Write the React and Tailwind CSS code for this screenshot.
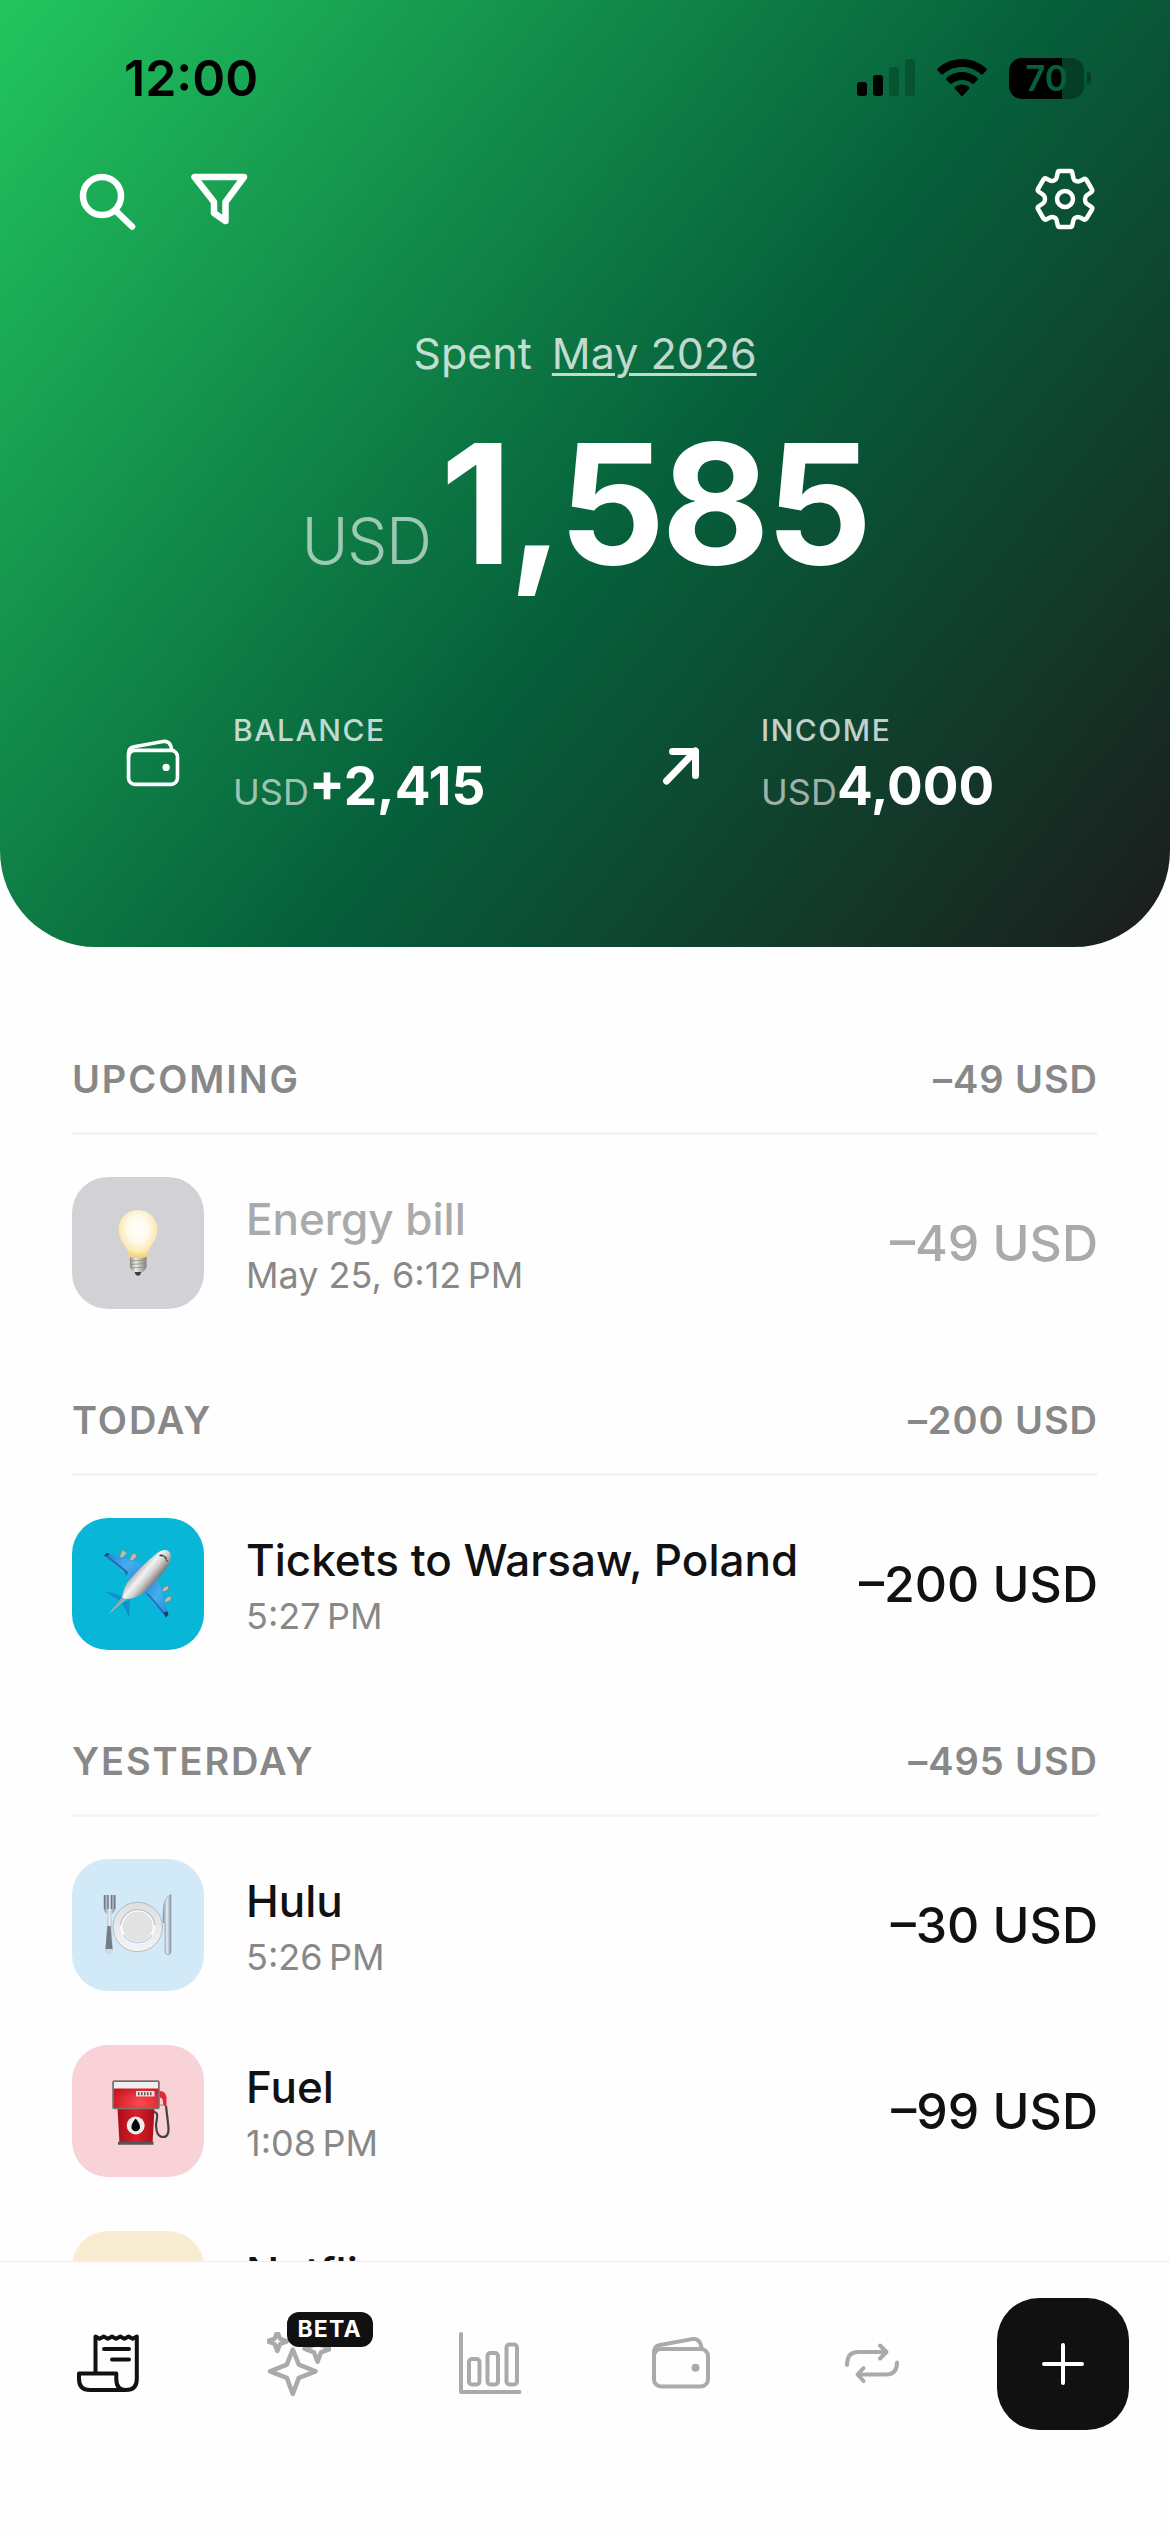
const sections = [
    {
        title: 'Upcoming',
        total: '–49 USD',
        items: [
            { name: 'Energy bill', time: 'May 25, 6:12\u202fPM', amount: '–49 USD', icon: 'bulb', tile: 'bg-[#d1d1d6]', muted: true },
        ],
    },
    {
        title: 'Today',
        total: '–200 USD',
        items: [
            { name: 'Tickets to Warsaw, Poland', time: '5:27\u202fPM', amount: '–200 USD', icon: 'plane', tile: 'bg-[#08b6d8]' },
        ],
    },
    {
        title: 'Yesterday',
        total: '–495 USD',
        items: [
            { name: 'Hulu', time: '5:26\u202fPM', amount: '–30 USD', icon: 'plate', tile: 'bg-[#d2eaf7]' },
            { name: 'Fuel', time: '1:08\u202fPM', amount: '–99 USD', icon: 'pump', tile: 'bg-[#f8d2d7]' },
            { name: 'Netflix', time: '12:40\u202fPM', amount: '–366 USD', tile: 'bg-[#f9edd1]' },
        ],
    },
];

const Icon = ({ children, className = 'size-16', stroke = 4 }) => (
    <svg viewBox="0 0 64 64" className={className} fill="none" stroke="currentColor" strokeWidth={stroke} strokeLinecap="round" strokeLinejoin="round" aria-hidden="true">
        {children}
    </svg>
);

const WalletIcon = ({ className, stroke }) => (
    <Icon className={className} stroke={stroke}>
        <rect x="5" y="17" width="54" height="37.5" rx="7" />
        <path d="M5 24.500V20.500Q5 14 11 13L43 7.100Q51.500 6 52.500 16.500" />
        <circle cx="46.500" cy="35.800" r="4" fill="currentColor" stroke="none" />
    </Icon>
);

const BulbEmoji = () => (
    <svg viewBox="0 0 66 66" className="size-[66px] overflow-visible" aria-hidden="true">
        <defs>
            <radialGradient id="glass" cx="0.5" cy="0.4" r="0.56">
                <stop offset="0" stopColor="#fffefa" />
                <stop offset="0.5" stopColor="#fefaea" />
                <stop offset="0.85" stopColor="#fbe9b0" />
                <stop offset="1" stopColor="#f3d57c" />
            </radialGradient>
            <linearGradient id="cap">
                <stop offset="0" stopColor="#8d8a80" />
                <stop offset="0.35" stopColor="#eeece6" />
                <stop offset="1" stopColor="#817e76" />
            </linearGradient>
        </defs>
        <path d="M29 61h8l-2 4q-2 1.500-4 0z" fill="#3c3c3c" />
        <path d="M25 46h16.500v11q-2 5-5 5h-7q-3-1-4.500-5z" fill="url(#cap)" />
        <path d="M25.500 51l15.500-1M25.500 54.500l15.500-1M26 58l14-1" stroke="#8f8c84" strokeWidth="0.8" />
        <path d="M33 0C22 0 13.500 8.500 13.500 19.500c0 11.500 8 15 11 27.500 5 1.500 12 1.500 17 0 3-12.500 11-16 11-27.500C52.500 8.500 44 0 33 0z" fill="url(#glass)" />
    </svg>
);

const PlaneEmoji = () => (
    <svg viewBox="0 0 66 66" className="size-[66px] overflow-visible" aria-hidden="true">
        <defs>
            <linearGradient id="body" gradientUnits="userSpaceOnUse" x1="30" y1="20" x2="48" y2="35">
                <stop offset="0" stopColor="#a9a9a9" />
                <stop offset="0.35" stopColor="#f3f3f3" />
                <stop offset="0.6" stopColor="#d2d0cf" />
                <stop offset="1" stopColor="#6f6b6a" />
            </linearGradient>
            <linearGradient id="wing" x1="0" y1="0" x2="1" y2="1">
                <stop offset="0" stopColor="#1f86d0" />
                <stop offset="0.5" stopColor="#45aef0" />
                <stop offset="1" stopColor="#1c86d2" />
            </linearGradient>
        </defs>
        <path d="M-0.700 40.300l17 4.200-2 5zM24.300 67L17 52l7.500-3z" fill="#148dcd" />
        <g fill="#bdbab8" stroke="#85817f" strokeWidth="0.8" strokeLinejoin="round">
            <path d="M17-.500q4-.5 4.500 3l-4.500 5-2.500-1.500z" />
            <path d="M27.500 2.500q4-.5 4.500 3l-5 4.500-2.500-1.500z" />
            <path d="M57 39.500l2-3.500 4.500-1.500q1 3-1.500 5l-4 1.500z" />
            <path d="M59.500 50l2-3.500 4.500-1.500q1 3-1.500 5l-4 1.500z" />
        </g>
        <path d="M-.7 4.300L2 2l36 11-12 20-4-8z" fill="url(#wing)" />
        <path d="M-.7 4.300L18.700 20l3 5 1.500-4L2.500 4z" fill="#1873ba" />
        <path d="M-.7 4.300L2 2l3 1-4.500 2.800z" fill="#1c3f5e" />
        <path d="M38 41l14.500-13q4 10 5.500 17l5.500 18-2.500 3.300z" fill="url(#wing)" />
        <path d="M40 41l4 2L60 62l1 4.300z" fill="#1873ba" />
        <path d="M58.500 61.500l2.500 5 2.500-3-1-3z" fill="#1c3f5e" />
        <path d="M3.700 62.700L17 48q1-9 5-16Q35 16 52 2q8-5.500 13-.500 3 5-3 15Q50 33 35 44q-7 4-14 4z" fill="url(#body)" />
        <path d="M3.700 62.700L17 46.500l3.500 1.500z" fill="#a5a09e" />
        <path d="M54.500 4.500q6-1 7.500 6" stroke="#3b3b3a" strokeWidth="1.600" strokeDasharray="4 0.800" fill="none" />
    </svg>
);

const PlateEmoji = () => (
    <svg viewBox="0 0 66 66" className="size-[66px] overflow-visible" aria-hidden="true">
        <defs>
            <linearGradient id="steel">
                <stop offset="0" stopColor="#8593a2" />
                <stop offset="0.5" stopColor="#e4edf7" />
                <stop offset="1" stopColor="#8993a0" />
            </linearGradient>
            <linearGradient id="rim" x1="0" y1="0" x2="0" y2="1">
                <stop offset="0" stopColor="#dedede" />
                <stop offset="1" stopColor="#f4f4f4" />
            </linearGradient>
        </defs>
        <path d="M-1 3v13q0 5 3.500 6L.5 58q0 4 3.500 4t3.500-4L6.500 22q3.500-1 3.500-6V3" fill="url(#steel)" />
        <path d="M-.5 3v14M3 3v14M6.500 3v14M9.800 3v14" stroke="#727b85" strokeWidth="1.500" />
        <path d="M2.500 34L.5 57h7l-2-23z" fill="#747c85" />
        <path d="M1 57h6v2q0 3-3 3t-3-3z" fill="#c6dcf7" />
        <path d="M66 2.500q-8 3-8 20v8h2v29q0 3 3 3t3-3z" fill="url(#steel)" stroke="#8b98a8" strokeWidth="0.600" />
        <circle cx="32.700" cy="35" r="24.700" fill="url(#rim)" stroke="#aab0b6" strokeWidth="0.800" />
        <circle cx="32.700" cy="35" r="17.500" fill="#f8faff" />
        <path d="M15.500 33a17.300 17.300 0 0 1 34.400 0" stroke="#bfc2c6" strokeWidth="1.200" fill="none" />
        <path d="M18.500 43a17 17 0 0 0 28.400 0" stroke="#c6d2ea" strokeWidth="1.500" fill="none" />
        <circle cx="32.700" cy="34.500" r="15" fill="#e2e2e2" />
    </svg>
);

const PumpEmoji = () => (
    <svg viewBox="0 0 66 66" className="size-[66px] overflow-visible" aria-hidden="true">
        <defs>
            <radialGradient id="head" cx="0.6" cy="0.8" r="0.7">
                <stop offset="0" stopColor="#ff4a50" />
                <stop offset="1" stopColor="#c8141f" />
            </radialGradient>
            <linearGradient id="tank">
                <stop offset="0" stopColor="#a80e18" />
                <stop offset="0.5" stopColor="#d8202b" />
                <stop offset="1" stopColor="#a80e18" />
            </linearGradient>
        </defs>
        <path d="M49 34q4 0 3 6c-2 8-1 19 6 19 6 0 6-7 5-14l-2-17" fill="none" stroke="#454143" strokeWidth="2.200" />
        <path d="M54 13q6-1 7.500 6v9h-3l-1-7-3-2z" fill="#dd2a35" />
        <path d="M54 19v8h4" fill="none" stroke="#8d8a8a" strokeWidth="1.200" />
        <path d="M12.500 30h37L47.500 66h-33z" fill="url(#tank)" />
        <path d="M13 63.800h35.500v3H13z" fill="#555" />
        <rect x="8" y="3" width="46" height="27.500" rx="1" fill="url(#head)" stroke="#7c7675" strokeWidth="1.600" />
        <path d="M9 4h44v6.500H9z" fill="#f0eeee" />
        <rect x="31" y="13" width="18.500" height="5.500" fill="#eee0df" />
        <path d="M33 15.800h15" stroke="#5c4a4b" strokeWidth="3" strokeDasharray="1.500 1.500" />
        <circle cx="30.700" cy="47.500" r="9" fill="#eee" />
        <path d="M30.700 40.500q4.300 5 4.300 8.500a4.300 4.300 0 0 1-8.600 0q0-3.500 4.300-8.500z" fill="#080808" />
    </svg>
);

const emojis = {
    bulb: BulbEmoji,
    plane: PlaneEmoji,
    plate: PlateEmoji,
    pump: PumpEmoji,
};

const StatusBar = () => (
    <div className="flex h-[60px] items-center justify-between pr-[79px] pl-[124px] text-black">
        <span className="text-[50px] leading-[60px] font-semibold">12:00</span>
        <div className="flex items-center gap-[22px]">
            <svg viewBox="0 0 58 38" className="h-[38px] w-[58px]" aria-hidden="true">
                <rect x="0" y="23" width="10" height="14" rx="3" />
                <rect x="16" y="16" width="10" height="21" rx="3" />
                <rect x="32" y="8" width="10" height="29" rx="3" opacity="0.2" />
                <rect x="48" y="0" width="10" height="37" rx="3" opacity="0.2" />
            </svg>
            <svg viewBox="0 0 50 38" className="h-[38px] w-[50px]" aria-hidden="true">
                <path d="M25 0C15.500 0 7 3.700.6 9.600q-.9.9 0 1.900l3.700 3.700q.9.800 1.800 0C11.200 10.600 17.800 8 25 8s13.800 2.600 18.900 7.200q.9.800 1.800 0l3.700-3.700q.9-1 0-1.900C43 3.700 34.500 0 25 0z" />
                <path d="M25 13c-6 0-11.500 2.300-15.600 6q-1 .9 0 1.900l3.700 3.700q.9.800 1.900 0C17.700 22.300 21.200 21 25 21s7.300 1.300 10 3.600q1 .8 1.900 0l3.700-3.700q1-1 0-1.900C36.500 15.300 31 13 25 13z" />
                <path d="M25 25.500c-2.700 0-5.200 1-7 2.600q-1 .9 0 1.900l6 6.400q1 1 2 0l6-6.400q1-1 0-1.900c-1.800-1.600-4.300-2.600-7-2.600z" />
            </svg>
            <div className="flex items-center gap-[3px]">
                <span className="flex h-[41px] w-[75px] items-center justify-center rounded-[13px] bg-[linear-gradient(90deg,#000_71%,#053d26_71%)] text-[35px] leading-[41px] font-semibold text-[#07603c]">70</span>
                <span className="h-3 w-1 rounded-r-full bg-[#053d26]" />
            </div>
        </div>
    </div>
);

const Stat = ({ label, value, icon }) => (
    <div className="flex flex-1 items-center gap-8 pl-[33px]">
        <span className="flex size-24 items-center justify-center">{icon}</span>
        <div className="flex flex-col gap-2">
            <span className="text-[30px] leading-9 font-medium tracking-wider text-white/75 uppercase">{label}</span>
            <span className="flex items-baseline">
                <span className="text-[36px] leading-9 text-white/60">USD</span>
                <span className="text-[53px] leading-[60px] font-bold">{value}</span>
            </span>
        </div>
    </div>
);

const Header = () => (
    <header className="rounded-b-[96px] bg-[linear-gradient(129deg,#22c55e_0%,#065f3b_55%,#1c1c1c_100%)] pt-12 pb-[131px] text-white">
        <StatusBar />
        <div className="mt-[59px] flex items-center justify-between pr-[73px] pl-[75px]">
            <div className="flex gap-12">
                <button type="button" aria-label="Search">
                    <Icon stroke={6.5}>
                        <circle cx="27" cy="29" r="19" />
                        <path d="M42 45L57 59.500" />
                    </Icon>
                </button>
                <button type="button" aria-label="Filter">
                    <Icon stroke={6.5}>
                        <path d="M7.500 10H57L38.500 35V54L27 46V35z" />
                    </Icon>
                </button>
            </div>
            <button type="button" aria-label="Settings">
                <Icon stroke={4.5}>
                    <path d="M26.500 4h11q1.500 0 1.700 1.500l1.300 6q.5 2 2.500 2.500 2 1 4 0l4-2q1.500-.5 2.500 1l5.500 9.500q.7 1.500-.5 2.500l-5 3.500q-1.500 1.500-1.500 4t1.500 4l5 3.500q1.200 1 .5 2.500L53.500 51.500q-1 1.500-2.500 1l-4-2q-2-1-4 0-2 .5-2.500 2.500l-1.300 5.500q-.2 1.500-1.700 1.500h-11q-1.500 0-1.700-1.500l-1.300-5.500q-.5-2-2.500-2.500-2-1-4 0l-4 2q-1.500.5-2.500-1L5 42q-.7-1.500.5-2.500l5-3.500q1.500-1.500 1.500-4T10.500 28l-5-3.500Q4.300 23.500 5 22l5.500-9.500q1-1.500 2.500-1l4 2q2 1 4 0 2-.5 2.500-2.500l1.300-5.500q.2-1.500 1.700-1.500z" />
                    <circle cx="32" cy="32" r="8" />
                </Icon>
            </button>
        </div>
        <p className="mt-[95px] flex justify-center gap-5 text-[43px] leading-[54px] text-white/75">
            <span>Spent</span>
            <a href="#month" className="underline decoration-3 underline-offset-4">May 2026</a>
        </p>
        <h1 className="mt-9 flex items-baseline justify-center gap-2.5">
            <span className="text-[64px] leading-[64px] font-light tracking-tight text-white/60">USD</span>
            <span className="text-[167px] leading-[174px] font-bold tracking-tight">1,585</span>
        </h1>
        <div className="mt-[122px] flex gap-[30px] px-[72px]">
            <Stat label="Balance" value="+2,415" icon={<WalletIcon className="size-[58px]" stroke={4} />} />
            <Stat
                label="Income"
                value="4,000"
                icon={
                    <Icon stroke={7}>
                        <path d="M17.500 49L46.500 19M23.500 19.500H46.500V43.500" />
                    </Icon>
                }
            />
        </div>
    </header>
);

const Transaction = ({ item }) => {
    const Emoji = emojis[item.icon];
    return (
        <li className="flex items-center gap-[42px]">
            <span className={`flex size-[132px] shrink-0 items-center justify-center rounded-[36px] ${item.tile}`}>
                {Emoji && <Emoji />}
            </span>
            <div className="flex min-w-0 flex-1 flex-col">
                <span className={`truncate text-[44px] leading-[63px] font-medium ${item.muted ? 'text-[#aaaaaa]' : 'text-[#111111]'}`}>{item.name}</span>
                <span className="text-[36px] leading-[48px] text-[#888888]">{item.time}</span>
            </div>
            <span className={`shrink-0 text-[50px] leading-[60px] font-medium ${item.muted ? 'text-[#aaaaaa]' : 'text-[#111111]'}`}>{item.amount}</span>
        </li>
    );
};

const TabBar = () => (
    <nav className="grid shrink-0 grid-cols-6 items-center justify-items-center border-t border-[#eeeeee] bg-[#fefefe] px-3 pt-9 pb-[102px] text-[#aaaaaa]">
        <button type="button" aria-label="Transactions" className="text-[#111111]">
            <Icon>
                <path d="M19.500 41V4.500l4 2.200 4.200-2.200 4.100 2.200L36 4.500l4.100 2.200 4.200-2.200 4.100 2.200 4.200-2.200 4.100 2.200 4.100-2.200V47q0 11-11 11-9.500 0-9.500-11V41.500H3V47q0 11 11 11H50" />
                <path d="M28 17H53M36 27.500H53" />
            </Icon>
        </button>
        <button type="button" aria-label="Assistant" className="relative">
            <Icon stroke={4.5}>
                <path d="M25.800 17.500l6 15.200 16.800 6.600-16.800 6.600-6 16-6-16L3 39.300l16.800-6.600z" />
                <path d="M10.300 0l2.700 6.600 7 2.700-7 2.700-2.700 7-2.700-7-7-2.700 7-2.700z" />
                <path d="M50.500 4l3.500 9 9.500 3.700L54 20.400l-3.500 9.300L47 20.400l-9.500-3.700L47 13z" />
            </Icon>
            <span className="absolute -top-5 left-5 rounded-xl bg-[#111111] px-[11px] text-[23px] leading-[35px] font-bold tracking-wider text-white">BETA</span>
        </button>
        <button type="button" aria-label="Reports">
            <Icon>
                <path d="M3 2V60H61.500" />
                <rect x="11" y="27" width="10.500" height="25.500" rx="3" />
                <rect x="29.500" y="21" width="10.500" height="31.500" rx="3" />
                <rect x="48.500" y="12.500" width="10.500" height="40" rx="3" />
            </Icon>
        </button>
        <button type="button" aria-label="Accounts">
            <WalletIcon />
        </button>
        <button type="button" aria-label="Recurring">
            <Icon>
                <path d="M7 33Q7 20 18 20H46M40 13.500L46.500 20 40 26.500" />
                <path d="M57 30.500Q57 42.500 46 42.500H18M23.500 36L17.500 42.500 23.500 49" />
            </Icon>
        </button>
        <button type="button" aria-label="Add transaction" className="flex size-[132px] items-center justify-center rounded-[42px] bg-[#111111] text-white">
            <Icon>
                <path d="M32 13V51M13 32H51" />
            </Icon>
        </button>
    </nav>
);

const App = () => {
    return (
        <div className="flex h-screen flex-col overflow-hidden bg-[#fefefe] font-['Inter',sans-serif]">
            <div className="min-h-0 flex-1 overflow-y-auto [scrollbar-width:none]">
                <Header />
                <main className="flex flex-col gap-[87px] px-[72px] pt-[108px] pb-9">
                    {sections.map((section) => (
                        <section key={section.title}>
                            <div className="flex items-center justify-between border-b-3 border-[#f5f5f5] pb-[29px] text-[38px] leading-[48px] font-semibold text-[#888888]">
                                <h2 className="tracking-wider uppercase">{section.title}</h2>
                                <span className="tracking-wide">{section.total}</span>
                            </div>
                            <ul className="flex flex-col gap-[54px] pt-[42px]">
                                {section.items.map((item) => (
                                    <Transaction key={item.name} item={item} />
                                ))}
                            </ul>
                        </section>
                    ))}
                </main>
            </div>
            <TabBar />
        </div>
    );
};

export default App;
